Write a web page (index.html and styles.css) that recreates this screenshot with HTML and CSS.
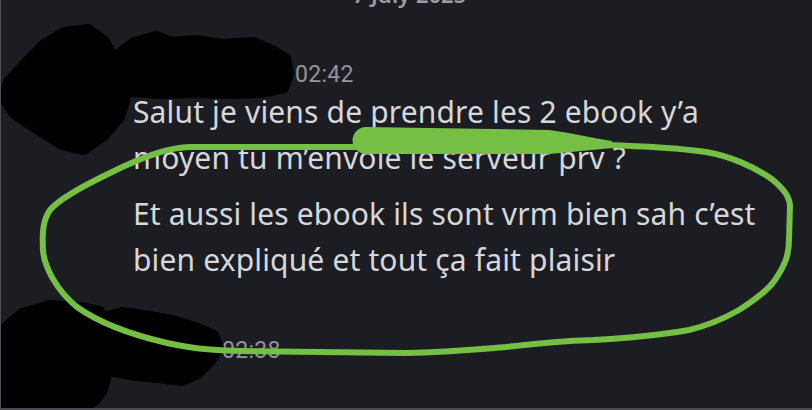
FILE: index.html
```html
<!DOCTYPE html>
<html lang="fr">
<head>
<meta charset="utf-8">
<title>Messages</title>
<link rel="stylesheet" href="styles.css">
</head>
<body>
<div class="screen">
  <div class="divider">7 July 2025</div>

  <div class="message first">
    <div class="avatar"></div>
    <div class="body">
      <div class="header"><span class="name name-1">pseudo</span><span class="time">02:42</span></div>
      <p class="line">Salut je viens de prendre les 2 ebook y’a moyen tu m’envoie le serveur prv ?</p>
      <p class="line">Et aussi les ebook ils sont vrm bien sah c’est bien expliqué et tout ça fait plaisir</p>
    </div>
  </div>

  <div class="message second">
    <div class="avatar"></div>
    <div class="body">
      <div class="header"><span class="name name-2">moi</span><span class="time">02:38</span></div>
    </div>
  </div>

  <svg class="marks" width="812" height="410" viewBox="0 0 812 410" aria-hidden="true">
    <g class="scribble">
      <path d="M88 29 L104 40 L114 58 L122 78 L126 98 L120 117 L104 136 L84 150 L62 145 L38 130 L14 114 L3 98 L8 82 L26 62 L44 44 L64 32 Z"/>
      <path d="M116 56 L134 42 L156 36 L172 42 L196 40 L222 44 L254 42 L272 50 L286 58 L289 74 L284 88 L262 93 L230 94 L196 93 L160 94 L132 92 L118 82 Z"/>
      <path d="M0 332 L22 313 L50 305 L80 307 L100 311 L104 326 L98 352 L88 382 L82 410 L0 410 Z"/>
      <path d="M92 320 L122 312 L150 316 L172 320 L196 327 L214 335 L219 348 L210 362 L198 374 L182 381 L158 378 L136 376 L114 372 L96 366 Z"/>
    </g>
    <path class="blob" d="M366 127 L549 130 C572 133 592 138 612 141 L612 148 C592 150 572 152 549 154 L366 154 A13 13 0 0 1 366 127 Z"/>
    <path class="loop" d="M372 147 L190 147 C170 147 140 158 110 173 C85 185 60 198 50 210 C43 220 42 232 43 250 C44 266 56 290 77 307 C95 320 120 332 167 343 C190 348 205 350 240 351 L406 353 C450 352 480 349 506 347 C540 343 560 341 593 340 C630 338 660 335 689 330 C710 325 725 318 739 310 C755 300 768 290 775 280 C785 265 789 255 789 240 L790 205 C789 195 782 188 773 180 C755 167 730 156 706 152 C670 147 640 146 606 145"/>
  </svg>
</div>
</body>
</html>
```

FILE: styles.css
```css
* { box-sizing: border-box; }

html, body {
  margin: 0;
  padding: 0;
  background: #1c1d22;
}

.screen {
  position: relative;
  width: 812px;
  height: 410px;
  overflow: hidden;
  background: #1c1d22;
  border-left: 1px solid #4e4f55;
  border-bottom: 2px solid #4a4b50;
  font-family: "Noto Sans", "Open Sans", sans-serif;
}

.divider {
  margin-top: -17px;
  height: 22px;
  line-height: 22px;
  font-size: 22px;
  font-weight: 600;
  color: #9c9da3;
  text-align: center;
  padding-left: 6px;
}

.message {
  display: grid;
  grid-template-columns: 132px 1fr;
}

.message.first { margin-top: 54px; }
.message.second { margin-top: 52px; }

.avatar {
  width: 80px;
  height: 80px;
  margin-left: 30px;
  border-radius: 50%;
  background: #000;
}

.header {
  display: flex;
  align-items: baseline;
  gap: 10px;
  height: 28px;
  line-height: 28px;
}

.name {
  display: inline-block;
  font-size: 24px;
  font-weight: 600;
  color: #000;
}
.name-1 { width: 152px; }
.name-2 { width: 79px; }

.time {
  font-family: Roboto, "Noto Sans", sans-serif;
  font-size: 23px;
  color: #93949b;
  letter-spacing: 0.3px;
}

.line {
  margin: 2px 0 0;
  width: 650px;
  font-size: 30px;
  line-height: 46px;
  letter-spacing: 0.15px;
  color: #d6d7da;
}
.line + .line { margin-top: 10px; }

.marks {
  position: absolute;
  left: -1px;
  top: 0;
  pointer-events: none;
}

.scribble path {
  fill: #000;
  stroke: #000;
  stroke-width: 10;
  stroke-linejoin: round;
}

.blob {
  fill: #74bf44;
}

.loop {
  fill: none;
  stroke: #74bf44;
  stroke-width: 6;
  stroke-linecap: round;
  stroke-linejoin: round;
}
```
